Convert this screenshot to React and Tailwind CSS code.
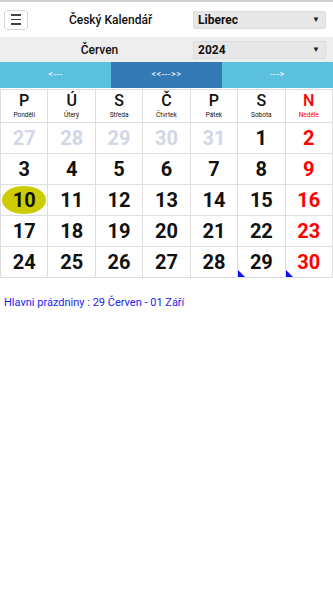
import React from 'react';

const font = { fontFamily: 'Roboto, "Noto Sans", sans-serif' };

const days = [
  ['P', 'Pondělí'],
  ['Ú', 'Úterý'],
  ['S', 'Středa'],
  ['Č', 'Čtvrtek'],
  ['P', 'Pátek'],
  ['S', 'Sobota'],
  ['N', 'Neděle'],
];

const weeks = [
  [27, 28, 29, 30, 31, 1, 2],
  [3, 4, 5, 6, 7, 8, 9],
  [10, 11, 12, 13, 14, 15, 16],
  [17, 18, 19, 20, 21, 22, 23],
  [24, 25, 26, 27, 28, 29, 30],
];

function Select({ value }) {
  return (
    <div className="w-[133px] h-[18px] bg-[#e7e7e7] border border-[#dcdcdc] rounded-[2px] flex items-center justify-between pl-[4px] pr-[5px]">
      <span className="text-[12px] font-bold text-[#111]">{value}</span>
      <span className="text-[8px] text-[#222]">▼</span>
    </div>
  );
}

export default function App() {
  return (
    <div className="w-[333px] h-[592px] bg-white" style={font}>
      {/* Top bar */}
      <div className="border-t-2 border-[#cfcfcf] h-[37px] flex items-center pl-[4px] pr-[7px]">
        <div className="w-[24px] h-[20px] border border-[#d6d6d6] rounded-[3px] flex items-center justify-center">
          <div className="flex flex-col gap-[3px]">
            <div className="w-[10px] h-[1.5px] bg-[#444]"></div>
            <div className="w-[10px] h-[1.5px] bg-[#444]"></div>
            <div className="w-[10px] h-[1.5px] bg-[#444]"></div>
          </div>
        </div>
        <div className="flex-1 text-center text-[12px] font-medium text-[#111]">Český Kalendář</div>
        <Select value="Liberec" />
      </div>

      {/* Month / year */}
      <div className="h-[25px] bg-[#eeeeee] flex items-center pr-[7px]">
        <div className="flex-1 text-center text-[12px] font-medium text-[#111] pl-[6px]">Červen</div>
        <Select value="2024" />
      </div>

      {/* Navigation */}
      <div className="h-[26px] flex text-white text-[9px] tracking-[0.6px]">
        <div className="flex-1 bg-[#5bc0de] flex items-center justify-center">&lt;---</div>
        <div className="flex-1 bg-[#337ab7] flex items-center justify-center">&lt;&lt;---&gt;&gt;</div>
        <div className="flex-1 bg-[#5bc0de] flex items-center justify-center">---&gt;</div>
      </div>

      {/* Calendar grid */}
      <div className="grid grid-cols-7 border-l border-t border-[#dedede] mt-[1px]">
        {days.map(([letter, name], i) => (
          <div key={i} className={`h-[33px] border-r border-b border-[#dedede] flex flex-col items-center justify-center ${i === 6 ? 'text-[#ff0000]' : 'text-[#111]'}`}>
            <span className="text-[16px] font-medium leading-[18px]">{letter}</span>
            <span className="text-[6.5px] leading-[9px] mt-[1px]">{name}</span>
          </div>
        ))}
        {weeks.map((week, w) =>
          week.map((d, i) => {
            const prev = w === 0 && d > 20;
            const today = w === 2 && i === 0;
            const flag = w === 4 && i >= 5;
            let color = 'text-[#111]';
            if (prev) color = 'text-[#d3d6e6]';
            else if (i === 6) color = 'text-[#ff0000]';
            return (
              <div key={`${w}-${i}`} className="relative h-[31px] border-r border-b border-[#dedede] flex items-center justify-center">
                {today && <div className="absolute inset-x-[1px] inset-y-[1px] rounded-[50%] bg-[#cccc00]"></div>}
                <span className={`relative text-[20px] font-bold ${color}`}>{d}</span>
                {flag && (
                  <div className="absolute left-0 bottom-0 w-0 h-0 border-b-[7px] border-r-[7px] border-b-[#1010ff] border-r-transparent"></div>
                )}
              </div>
            );
          })
        )}
      </div>

      <div className="mt-[17px] pl-[4px] text-[11px] text-[#2222ee]">Hlavni prázdniny : 29 Červen - 01 Září</div>
    </div>
  );
}
